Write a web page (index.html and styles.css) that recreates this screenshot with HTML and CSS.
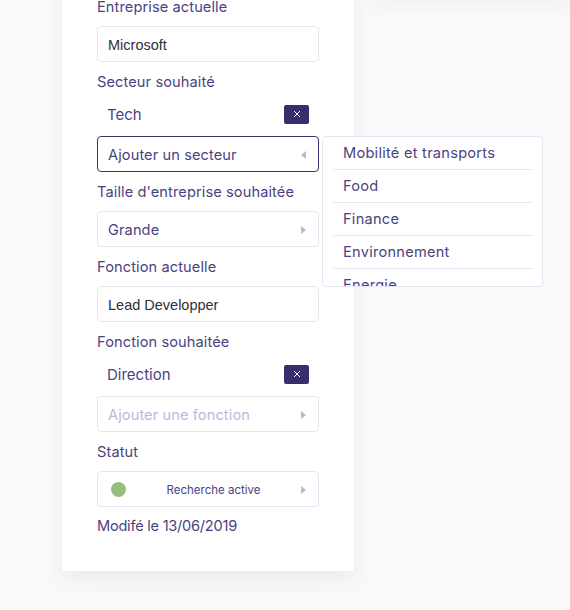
FILE: index.html
```html
<!DOCTYPE html>
<html lang="fr">
<head>
<meta charset="utf-8">
<title>Profil</title>
<link rel="stylesheet" href="styles.css">
</head>
<body>
<div class="page">
  <div class="card profile">
    <div class="field">
      <div class="label">Entreprise actuelle</div>
      <div class="control"><span class="value">Microsoft</span></div>
    </div>
    <div class="field">
      <div class="label">Secteur souhaité</div>
      <div class="tag"><span class="tag-text">Tech</span><span class="tag-x"><svg width="8" height="8" viewBox="0 0 8 8"><path d="M1 1L7 7M7 1L1 7" stroke="#fff" stroke-width="1"/></svg></span></div>
      <div class="select-wrap">
        <div class="control select focused"><span class="choice">Ajouter un secteur</span><svg class="arrow" width="5" height="8" viewBox="0 0 5 8"><path d="M5 0L0 4L5 8Z" fill="#b7b6dd"/></svg></div>
        <div class="dropdown">
          <div class="option">Mobilité et transports</div>
          <div class="option">Food</div>
          <div class="option">Finance</div>
          <div class="option">Environnement</div>
          <div class="option">Energie</div>
        </div>
      </div>
    </div>
    <div class="field">
      <div class="label">Taille d'entreprise souhaitée</div>
      <div class="control select"><span class="choice">Grande</span><svg class="arrow" width="5" height="8" viewBox="0 0 5 8"><path d="M0 0L5 4L0 8Z" fill="#b7b6dd"/></svg></div>
    </div>
    <div class="field">
      <div class="label">Fonction actuelle</div>
      <div class="control"><span class="value">Lead Developper</span></div>
    </div>
    <div class="field">
      <div class="label">Fonction souhaitée</div>
      <div class="tag"><span class="tag-text">Direction</span><span class="tag-x"><svg width="8" height="8" viewBox="0 0 8 8"><path d="M1 1L7 7M7 1L1 7" stroke="#fff" stroke-width="1"/></svg></span></div>
      <div class="control select"><span class="choice placeholder">Ajouter une fonction</span><svg class="arrow" width="5" height="8" viewBox="0 0 5 8"><path d="M0 0L5 4L0 8Z" fill="#b7b6dd"/></svg></div>
    </div>
    <div class="field">
      <div class="label">Statut</div>
      <div class="control select status"><span class="dot"></span><span class="status-text">Recherche active</span><svg class="arrow" width="5" height="8" viewBox="0 0 5 8"><path d="M0 0L5 4L0 8Z" fill="#b7b6dd"/></svg></div>
    </div>
    <div class="label modified">Modifé le 13/06/2019</div>
  </div>
  <div class="card side"></div>
</div>
</body>
</html>
```
FILE: styles.css
```css
* { box-sizing: border-box; }
html, body { margin: 0; padding: 0; }
body {
  background: #f9f9fb;
  font-family: Inter, "Open Sans", sans-serif;
  color: #4a4382;
  width: 570px;
  height: 610px;
  overflow: hidden;
}
.page {
  display: flex;
  align-items: flex-start;
  gap: 20px;
  padding-left: 62px;
}
.card {
  flex: none;
  background: #fff;
  border-radius: 3px;
  box-shadow: 0 8px 22px rgba(50, 50, 90, 0.07);
}
.profile {
  width: 292px;
  margin-top: -40px;
  padding: 37px 35px 35px;
  display: flex;
  flex-direction: column;
  gap: 10px;
}
.side {
  width: 196px;
  height: 120px;
  margin-top: -120px;
  border-radius: 3px 0 0 3px;
  box-shadow: 0 6px 18px rgba(50, 50, 90, 0.045);
}
.field {
  display: flex;
  flex-direction: column;
  gap: 9px;
}
.label {
  font-size: 14.6px;
  letter-spacing: 0.1px;
  line-height: 20px;
  color: #4a4382;
  white-space: nowrap;
}
.control {
  height: 36px;
  border: 1px solid #e7e5f3;
  border-radius: 4px;
  display: flex;
  align-items: center;
  padding: 1px 12px 0 10px;
}
.value {
  font-family: "Liberation Sans", Arial, sans-serif;
  font-size: 14.5px;
  color: #2f2f3a;
}
.select { justify-content: space-between; }
.focused { border-color: #3b2f6d; }
.choice {
  font-size: 14.6px;
  letter-spacing: 0.1px;
  color: #4a4382;
}
.placeholder { color: #bab8dd; }
.arrow { flex: none; }
.tag {
  height: 26px;
  display: flex;
  align-items: center;
  justify-content: space-between;
  padding: 0 10px 0 10px;
}
.tag-text {
  font-size: 15px;
  color: #4a4382;
}
.tag-x {
  width: 25px;
  height: 19px;
  background: #392d6c;
  border-radius: 2px;
  display: flex;
  align-items: center;
  justify-content: center;
}
.select-wrap { position: relative; }
.dropdown {
  position: absolute;
  top: 0;
  left: 225px;
  width: 221px;
  height: 151px;
  background: #fff;
  border: 1px solid #e7e5f3;
  border-radius: 4px;
  overflow: hidden;
  padding: 0 10px;
}
.option {
  height: 33px;
  line-height: 32px;
  padding-left: 10px;
  font-size: 14.6px;
  letter-spacing: 0.25px;
  color: #4a4382;
  border-bottom: 1px solid #e7e5f3;
  white-space: nowrap;
}
.status { padding-left: 13px; }
.dot {
  width: 15px;
  height: 15px;
  border-radius: 50%;
  background: #93bf7b;
  flex: none;
}
.status-text {
  font-size: 11.5px;
  color: #4a4382;
}
.modified {
  margin-top: -1px;
  letter-spacing: -0.25px;
}
```
